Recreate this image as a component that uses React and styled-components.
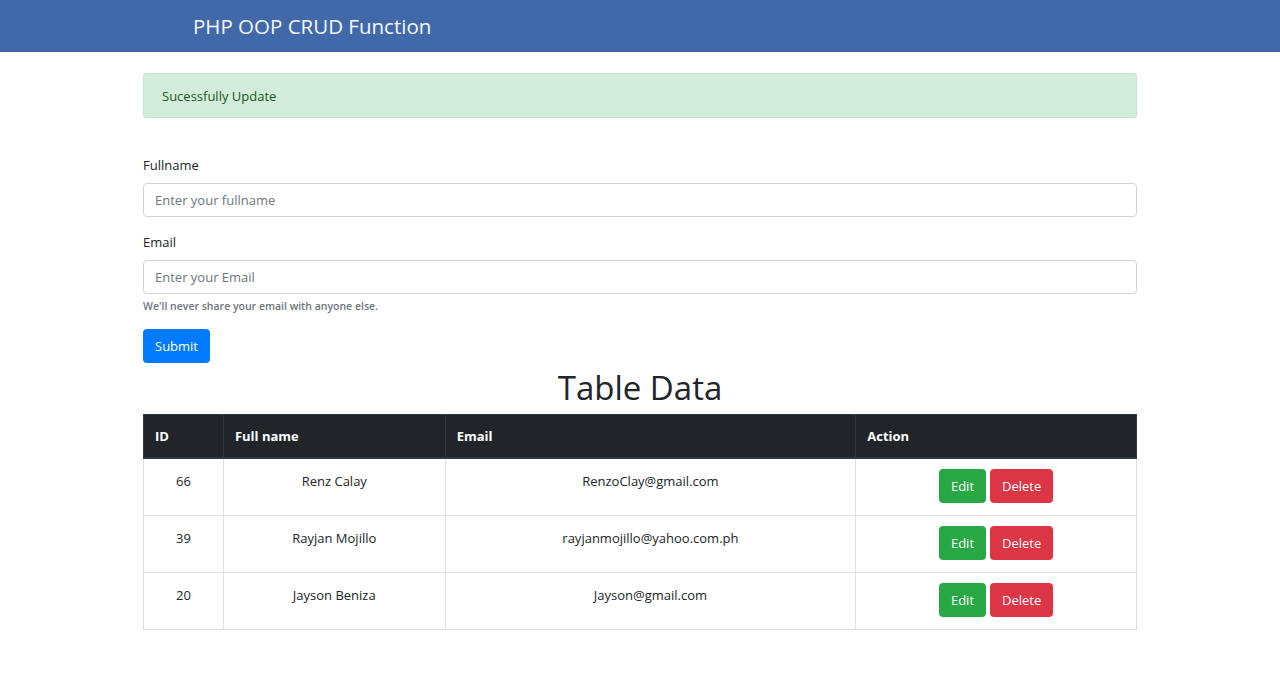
import React from "react";
import styled, { createGlobalStyle } from "styled-components";

const Global = createGlobalStyle`
  * { box-sizing: border-box; }
  html, body { margin: 0; padding: 0; background: #fff; }
  body {
    font-family: "Open Sans", "Noto Sans", sans-serif;
    font-size: 13px;
    line-height: 22px;
    color: #212529;
  }
`;

const Navbar = styled.header`
  height: 52px;
  background: #4169aa;
  display: flex;
  align-items: center;
  padding-left: 193px;
`;

const Brand = styled.div`
  color: #f4f7fb;
  font-size: 20.5px;
  line-height: 28px;
`;

const Container = styled.main`
  width: 994px;
  margin: 0 auto;
  padding-top: 21px;
`;

const Alert = styled.div`
  height: 45px;
  display: flex;
  align-items: center;
  padding: 0 18px;
  background: #d4edda;
  border: 1px solid #c3e6cb;
  border-radius: 3px;
  color: #155724;
  margin-bottom: 36px;
`;

const FormGroup = styled.div`
  margin-bottom: 14px;
`;

const Label = styled.label`
  display: block;
  line-height: 22px;
  margin-bottom: 7px;
`;

const Input = styled.input`
  display: block;
  width: 100%;
  height: 34px;
  padding: 0 11px;
  border: 1px solid #ced4da;
  border-radius: 4px;
  font: inherit;
  color: #495057;
  background: #fff;
  &::placeholder { color: #6c757d; opacity: 1; }
`;

const Help = styled.small`
  display: block;
  margin-top: 4px;
  font-size: 10.5px;
  line-height: 17px;
  font-weight: 600;
  color: #6c757d;
`;

const Button = styled.button`
  height: 34px;
  padding: 0 11px;
  border: 1px solid ${(p) => p.$bg};
  background: ${(p) => p.$bg};
  color: #fff;
  border-radius: 3.5px;
  font: inherit;
  font-size: 13px;
  cursor: pointer;
`;

const Heading = styled.h1`
  margin: 3px 0 4px;
  text-align: center;
  font-size: 33px;
  line-height: 44px;
  font-weight: 400;
  color: #212529;
`;

const Table = styled.table`
  width: 100%;
  border-collapse: collapse;
`;

const Th = styled.th`
  background: #212529;
  color: #fff;
  text-align: left;
  font-weight: 700;
  padding: 10px 11px;
  line-height: 22px;
  border: 1px solid #32383e;
  border-bottom-width: 2px;
  width: ${(p) => p.$w}px;
`;

const Td = styled.td`
  text-align: center;
  vertical-align: top;
  padding: 10px 11px 12px;
  line-height: 24px;
  border: 1px solid #dee2e6;
`;

const Actions = styled.div`
  display: flex;
  justify-content: center;
  gap: 4px;
`;

const rows = [
  { id: 66, name: "Renz Calay", email: "RenzoClay@gmail.com" },
  { id: 39, name: "Rayjan Mojillo", email: "rayjanmojillo@yahoo.com.ph" },
  { id: 20, name: "Jayson Beniza", email: "Jayson@gmail.com" },
];

export default function App() {
  return (
    <>
      <Global />
      <Navbar>
        <Brand>PHP OOP CRUD Function</Brand>
      </Navbar>
      <Container>
        <Alert>Sucessfully Update</Alert>
        <FormGroup>
          <Label>Fullname</Label>
          <Input placeholder="Enter your fullname" />
        </FormGroup>
        <FormGroup>
          <Label>Email</Label>
          <Input placeholder="Enter your Email" />
          <Help>We'll never share your email with anyone else.</Help>
        </FormGroup>
        <Button $bg="#007bff">Submit</Button>
        <Heading>Table Data</Heading>
        <Table>
          <thead>
            <tr>
              <Th $w={80}>ID</Th>
              <Th $w={222}>Full name</Th>
              <Th $w={411}>Email</Th>
              <Th $w={281}>Action</Th>
            </tr>
          </thead>
          <tbody>
            {rows.map((r) => (
              <tr key={r.id}>
                <Td>{r.id}</Td>
                <Td>{r.name}</Td>
                <Td>{r.email}</Td>
                <Td>
                  <Actions>
                    <Button $bg="#28a745">Edit</Button>
                    <Button $bg="#dc3545">Delete</Button>
                  </Actions>
                </Td>
              </tr>
            ))}
          </tbody>
        </Table>
      </Container>
    </>
  );
}
